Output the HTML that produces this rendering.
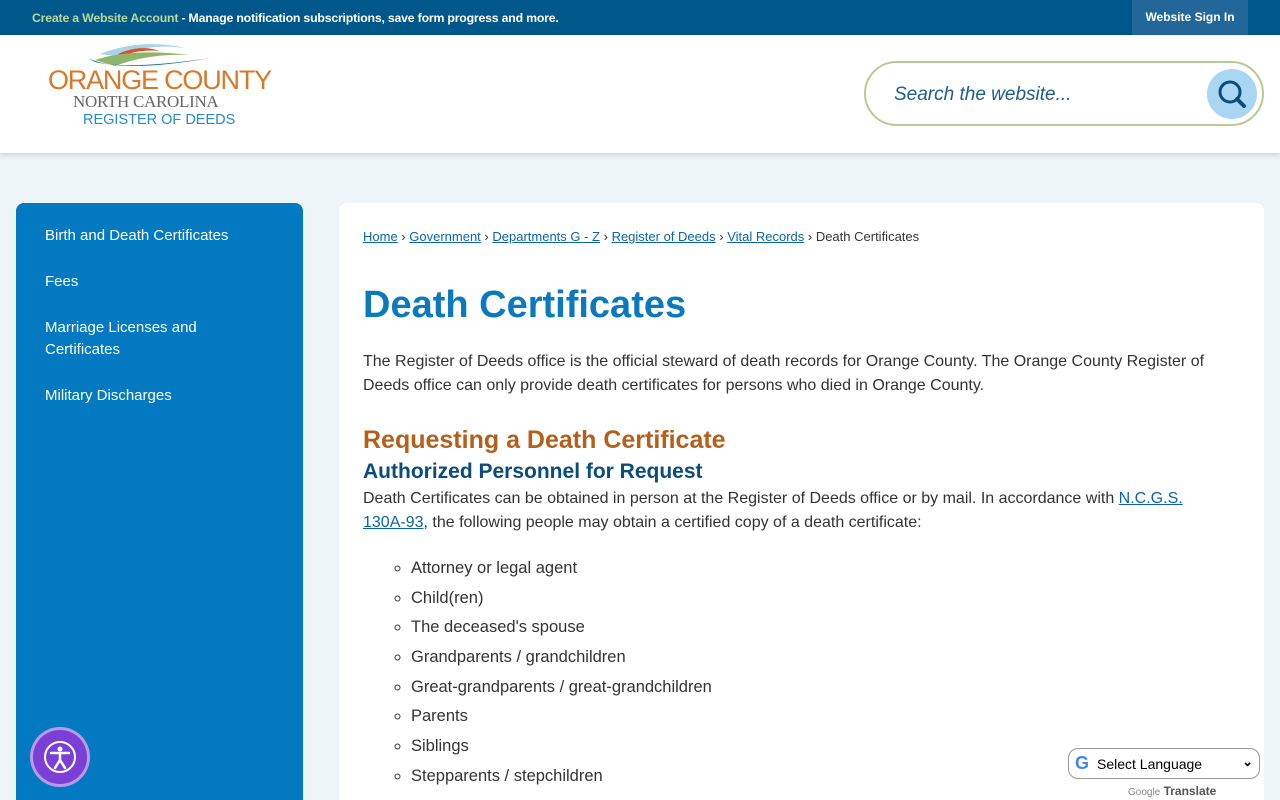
<!DOCTYPE html>
<html><head><meta charset="utf-8"><style>
*{box-sizing:border-box;margin:0;padding:0}
html,body{width:1280px;height:800px;overflow:hidden}
body{background:#eef5f9;font-family:"Liberation Sans",sans-serif;position:relative}
.top{position:absolute;left:0;top:0;width:1280px;height:35px;background:#00578a;color:#fff;font-size:12.3px;font-weight:bold}
.top .l{position:absolute;left:32px;top:11px;letter-spacing:-0.2px}
.top .l b{color:#b9d89b}
.top .r{position:absolute;left:1132px;top:0;width:116px;height:35px;background:#23679a;text-align:center;line-height:35px;font-size:12px}
.hdr{position:absolute;left:0;top:35px;width:1280px;height:118px;background:#fff;box-shadow:0 2px 5px rgba(0,0,0,.15)}
.search{position:absolute;left:864px;top:61px;width:400px;height:65px;border:2px solid #b8c993;border-radius:33px;background:#fff}
.search span{position:absolute;left:28px;top:21px;font-style:italic;font-size:19px;color:#1f5d86}
.search .btn{position:absolute;right:5px;top:6px;width:50px;height:50px;border-radius:50%;background:#a9d6f3}
.side{position:absolute;left:16px;top:203px;width:287px;height:597px;background:#0279c0;border-radius:8px 8px 0 0;color:#fff;font-size:15px}
.side div{position:absolute;left:29px;line-height:22px}
.main{position:absolute;left:339px;top:203px;width:925px;height:597px;background:#fff;border-radius:8px 8px 0 0}
.bc{position:absolute;left:24px;top:26px;font-size:13px;color:#333}
.bc a{color:#0a65a8;text-decoration:underline}
h1{position:absolute;left:24px;top:81px;font-size:38px;color:#0b79bd;font-weight:bold}
p{font-size:16px;color:#333;line-height:24px}
a{color:#0a65a8}
h2{position:absolute;left:24px;top:223px;font-size:25px;color:#b55f1c}
h3{position:absolute;left:24px;top:257px;font-size:21px;color:#0b4c7a}
ul{position:absolute;left:72px;top:356px;list-style:circle;font-size:16.5px;color:#333}
li{height:29.7px}
.gt{position:absolute;left:1068px;top:748px;width:192px;height:31px;border:1px solid #999;border-radius:10px;background:#fff;font-size:14px}
</style></head><body>
<div class="top"><div class="l"><b>Create a Website Account</b> - Manage notification subscriptions, save form progress and more.</div><div class="r">Website Sign In</div></div>
<div class="hdr">
<svg style="position:absolute;left:60px;top:5px" width="160" height="32" viewBox="0 0 160 32">
<path d="M40 14 Q80 -2 125 8 Q90 3 55 16Z" fill="#a8d3ea"/>
<path d="M58 14 Q80 4 100 11 Q80 9 62 16Z" fill="#d3542a"/>
<path d="M35 20 Q70 8 130 15 Q90 13 55 26Z" fill="#8fb56a"/>
<path d="M28 18 Q60 34 150 18 Q70 30 35 22Z" fill="#1b6fae"/>
</svg>
<div style="position:absolute;left:48px;top:30px;font-size:27px;color:#d8782a;letter-spacing:-1.2px">ORANGE COUNTY</div>
<div style="position:absolute;left:73px;top:57px;font-family:'Liberation Serif',serif;font-size:17px;color:#666;letter-spacing:-0.3px">NORTH CAROLINA</div>
<div style="position:absolute;left:83px;top:77px;font-size:14.5px;color:#2a8ac7">REGISTER OF DEEDS</div>
</div>
<div class="search"><span>Search the website...</span><div class="btn"><svg width="50" height="50"><circle cx="23" cy="23" r="10" fill="none" stroke="#0b4c7a" stroke-width="3"/><line x1="30" y1="30" x2="37" y2="37" stroke="#0b4c7a" stroke-width="4" stroke-linecap="round"/></svg></div></div>
<div class="side">
<div style="top:22px">Birth and Death Certificates</div>
<div style="top:68px">Fees</div>
<div style="top:114px">Marriage Licenses and<br>Certificates</div>
<div style="top:182px">Military Discharges</div>
</div>
<div class="main">
<div class="bc"><a>Home</a> › <a>Government</a> › <a>Departments G - Z</a> › <a>Register of Deeds</a> › <a>Vital Records</a> › Death Certificates</div>
<h1>Death Certificates</h1>
<p style="position:absolute;left:24px;top:147px;width:890px">The Register of Deeds office is the official steward of death records for Orange County. The Orange County Register of Deeds office can only provide death certificates for persons who died in Orange County.</p>
<h2>Requesting a Death Certificate</h2>
<h3>Authorized Personnel for Request</h3>
<p style="position:absolute;left:24px;top:284px;width:890px">Death Certificates can be obtained in person at the Register of Deeds office or by mail. In accordance with <a style="text-decoration:underline">N.C.G.S.<br>130A-93</a>, the following people may obtain a certified copy of a death certificate:</p>
<ul><li>Attorney or legal agent</li><li>Child(ren)</li><li>The deceased's spouse</li><li>Grandparents / grandchildren</li><li>Great-grandparents / great-grandchildren</li><li>Parents</li><li>Siblings</li><li>Stepparents / stepchildren</li></ul>
</div>
<div style="position:absolute;left:30px;top:727px;width:60px;height:60px;border-radius:50%;background:#7b3fd6;box-shadow:0 0 0 3px #b79be8 inset">
<svg width="60" height="60"><circle cx="30" cy="30" r="15" fill="none" stroke="#fff" stroke-width="2"/><circle cx="30" cy="22" r="2.5" fill="#fff"/><path d="M21 26 L39 26 M30 26 L30 33 M30 33 L25 41 M30 33 L35 41" stroke="#fff" stroke-width="2.5" fill="none" stroke-linecap="round"/></svg></div>
<div class="gt"><span style="position:absolute;left:6px;top:4px;font-weight:bold;font-size:18px;color:#4285f4">G</span><span style="position:absolute;left:28px;top:7px">Select Language</span><span style="position:absolute;right:6px;top:5px;font-size:13px;font-weight:bold">⌄</span></div>
<div style="position:absolute;left:1128px;top:784px;font-size:12px;color:#555"><span style="font-size:10px;color:#888">Google</span> <b>Translate</b></div>
</body></html>
